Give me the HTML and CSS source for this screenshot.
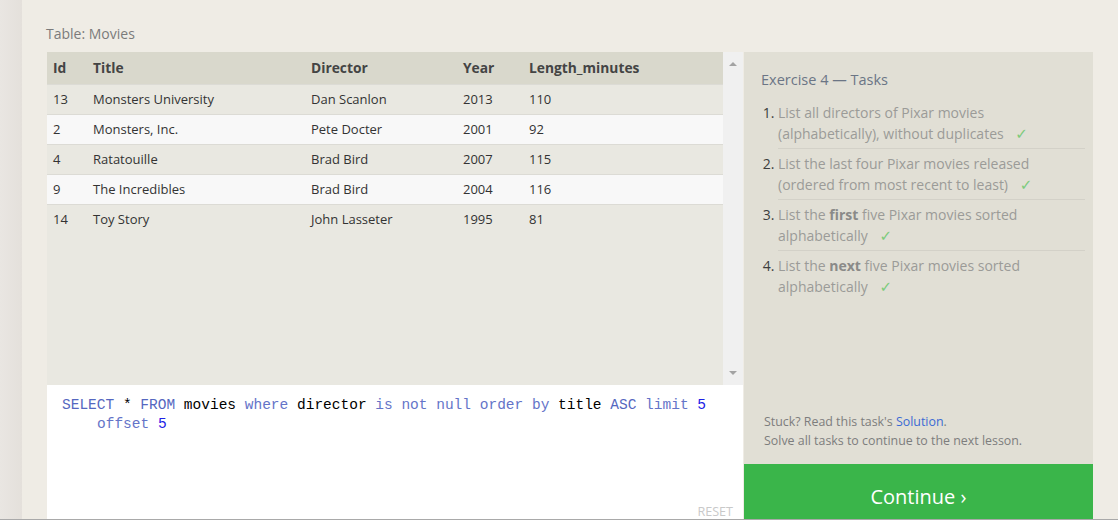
FILE: index.html
```html
<!DOCTYPE html>
<html>
<head>
<meta charset="utf-8">
<link rel="stylesheet" href="styles.css">
</head>
<body>
<div class="page">
  <div class="side-strip"></div>
  <main class="main">
    <div class="table-label">Table: Movies</div>
    <div class="workspace">
      <div class="left-col">
        <div class="results">
          <div class="table-wrap">
            <table class="movies">
              <thead>
                <tr><th class="c-id">Id</th><th class="c-title">Title</th><th class="c-dir">Director</th><th class="c-year">Year</th><th>Length_minutes</th></tr>
              </thead>
              <tbody>
                <tr><td>13</td><td>Monsters University</td><td>Dan Scanlon</td><td>2013</td><td>110</td></tr>
                <tr><td>2</td><td>Monsters, Inc.</td><td>Pete Docter</td><td>2001</td><td>92</td></tr>
                <tr><td>4</td><td>Ratatouille</td><td>Brad Bird</td><td>2007</td><td>115</td></tr>
                <tr><td>9</td><td>The Incredibles</td><td>Brad Bird</td><td>2004</td><td>116</td></tr>
                <tr><td>14</td><td>Toy Story</td><td>John Lasseter</td><td>1995</td><td>81</td></tr>
              </tbody>
            </table>
          </div>
          <div class="scrollbar">
            <span class="arrow up"></span>
            <span class="arrow down"></span>
          </div>
        </div>
        <div class="editor">
          <div class="code">
            <div class="line"><span class="kw">SELECT</span> * <span class="kw">FROM</span> movies <span class="kw2">where</span> director <span class="kw2">is</span> <span class="kw2">not</span> <span class="kw2">null</span> <span class="kw2">order</span> <span class="kw2">by</span> title <span class="kw">ASC</span> <span class="kw2">limit</span> <span class="num">5</span></div>
            <div class="line wrapped"><span class="kw2">offset</span> <span class="num">5</span></div>
          </div>
          <div class="reset">RESET</div>
        </div>
      </div>
      <aside class="tasks-panel">
        <div class="tasks-body">
          <h2 class="tasks-title">Exercise 4 — Tasks</h2>
          <ol class="tasks">
            <li>List all directors of Pixar movies (alphabetically), without duplicates <span class="check">✓</span></li>
            <li>List the last four Pixar movies released (ordered from most recent to least) <span class="check">✓</span></li>
            <li>List the <b>first</b> five Pixar movies sorted alphabetically <span class="check">✓</span></li>
            <li>List the <b>next</b> five Pixar movies sorted alphabetically <span class="check">✓</span></li>
          </ol>
        </div>
        <div class="help">
          <div>Stuck? Read this task's <a class="solution">Solution</a>.</div>
          <div>Solve all tasks to continue to the next lesson.</div>
        </div>
        <div class="continue">Continue ›</div>
      </aside>
    </div>
  </main>
</div>
</body>
</html>
```

FILE: styles.css
```css
* { box-sizing: border-box; }
html, body { margin: 0; padding: 0; }
body {
  width: 1118px;
  height: 520px;
  overflow: hidden;
  background: #efece5;
  font-family: "Open Sans", "Noto Sans", sans-serif;
}
.page {
  display: flex;
  height: 520px;
  border-bottom: 1px solid #a9a9a9;
}
.side-strip {
  width: 22px;
  flex: none;
  background: linear-gradient(to right, #e9e6e2, #e4e0db);
}
.main {
  flex: 1;
  min-height: 0;
  padding-left: 25px;
  display: flex;
  flex-direction: column;
}
.table-label {
  flex: none;
  height: 52px;
  padding-top: 25px;
  margin-left: -1px;
  font-size: 14px;
  color: #7b7b7b;
  line-height: 18px;
}
.workspace {
  display: flex;
  gap: 1px;
  flex: 1;
  min-height: 0;
}
.left-col {
  width: 696px;
  display: flex;
  flex-direction: column;
}
.results {
  flex: none;
  height: 333px;
  display: flex;
  background: #e9e8e1;
}
.table-wrap { flex: 1; }
.movies {
  width: 100%;
  border-collapse: collapse;
  font-size: 13px;
  color: #333;
}
.movies th {
  background: #d9d8cc;
  height: 32px;
  padding: 0 0 0 6px;
  text-align: left;
  font-weight: 700;
  font-size: 13.8px;
  color: #444;
}
.movies td {
  height: 30px;
  padding: 0 0 0 6px;
  border-top: 1px solid #dcdbd5;
}
.movies tbody tr:nth-child(odd) td { background: #e9e8e1; }
.movies tbody tr:nth-child(even) td { background: #f8f8f8; }
.c-id { width: 40px; }
.c-title { width: 218px; }
.c-dir { width: 152px; }
.c-year { width: 66px; }
.scrollbar {
  width: 20px;
  background: #f0f0f0;
  display: flex;
  flex-direction: column;
  justify-content: space-between;
  align-items: center;
  padding: 10px 0 10px;
}
.arrow {
  width: 0; height: 0;
  border-left: 4px solid transparent;
  border-right: 4px solid transparent;
}
.arrow.up { border-bottom: 4px solid #a3a3a3; }
.arrow.down { border-top: 4px solid #a3a3a3; }
.editor {
  flex: 1;
  min-height: 0;
  background: #fff;
  position: relative;
  padding: 11px 15px;
}
.code {
  font-family: "Liberation Mono", "DejaVu Sans Mono", monospace;
  font-size: 14.5px;
  line-height: 19px;
  color: #000;
}
.line { white-space: pre; }
.wrapped { padding-left: 35px; }
.kw { color: #5567c0; }
.kw2 { color: #6474c8; }
.num { color: #2020e6; }
.reset {
  position: absolute;
  right: 10px;
  bottom: -1px;
  font-size: 12.6px;
  color: #c9c9c9;
  line-height: 16px;
}
.tasks-panel {
  width: 349px;
  display: flex;
  flex-direction: column;
  background: #e1dfd5;
}
.tasks-body {
  flex: 1;
  padding: 18px 8px 0 17px;
}
.tasks-title {
  margin: 0 0 12px;
  font-size: 14.5px;
  font-weight: 400;
  color: #6b7585;
  line-height: 20px;
}
.tasks {
  margin: 0;
  padding-left: 17px;
  font-size: 14px;
  line-height: 21px;
  color: #9b9b98;
}
.tasks li {
  padding: 0 0 4px;
  margin-bottom: 4px;
  border-bottom: 1px solid #d3d1c8;
}
.tasks li:last-child { border-bottom: none; }
.tasks li::marker { color: #3d3d3d; }
.tasks b { color: #8a8a88; }
.check {
  color: #7ccb7c;
  margin-left: 8px;
  font-family: "DejaVu Sans", sans-serif;
  font-size: 15px;
  line-height: 1;
}
.help {
  padding: 0 10px 14px 20px;
  font-size: 12.4px;
  line-height: 19px;
  color: #7d7d7d;
}
.solution { color: #3a6ad4; }
.continue {
  flex: none;
  height: 55px;
  padding-top: 10px;
  background: #3ab54a;
  color: #fff;
  font-size: 20px;
  display: flex;
  align-items: center;
  justify-content: center;
}
```
